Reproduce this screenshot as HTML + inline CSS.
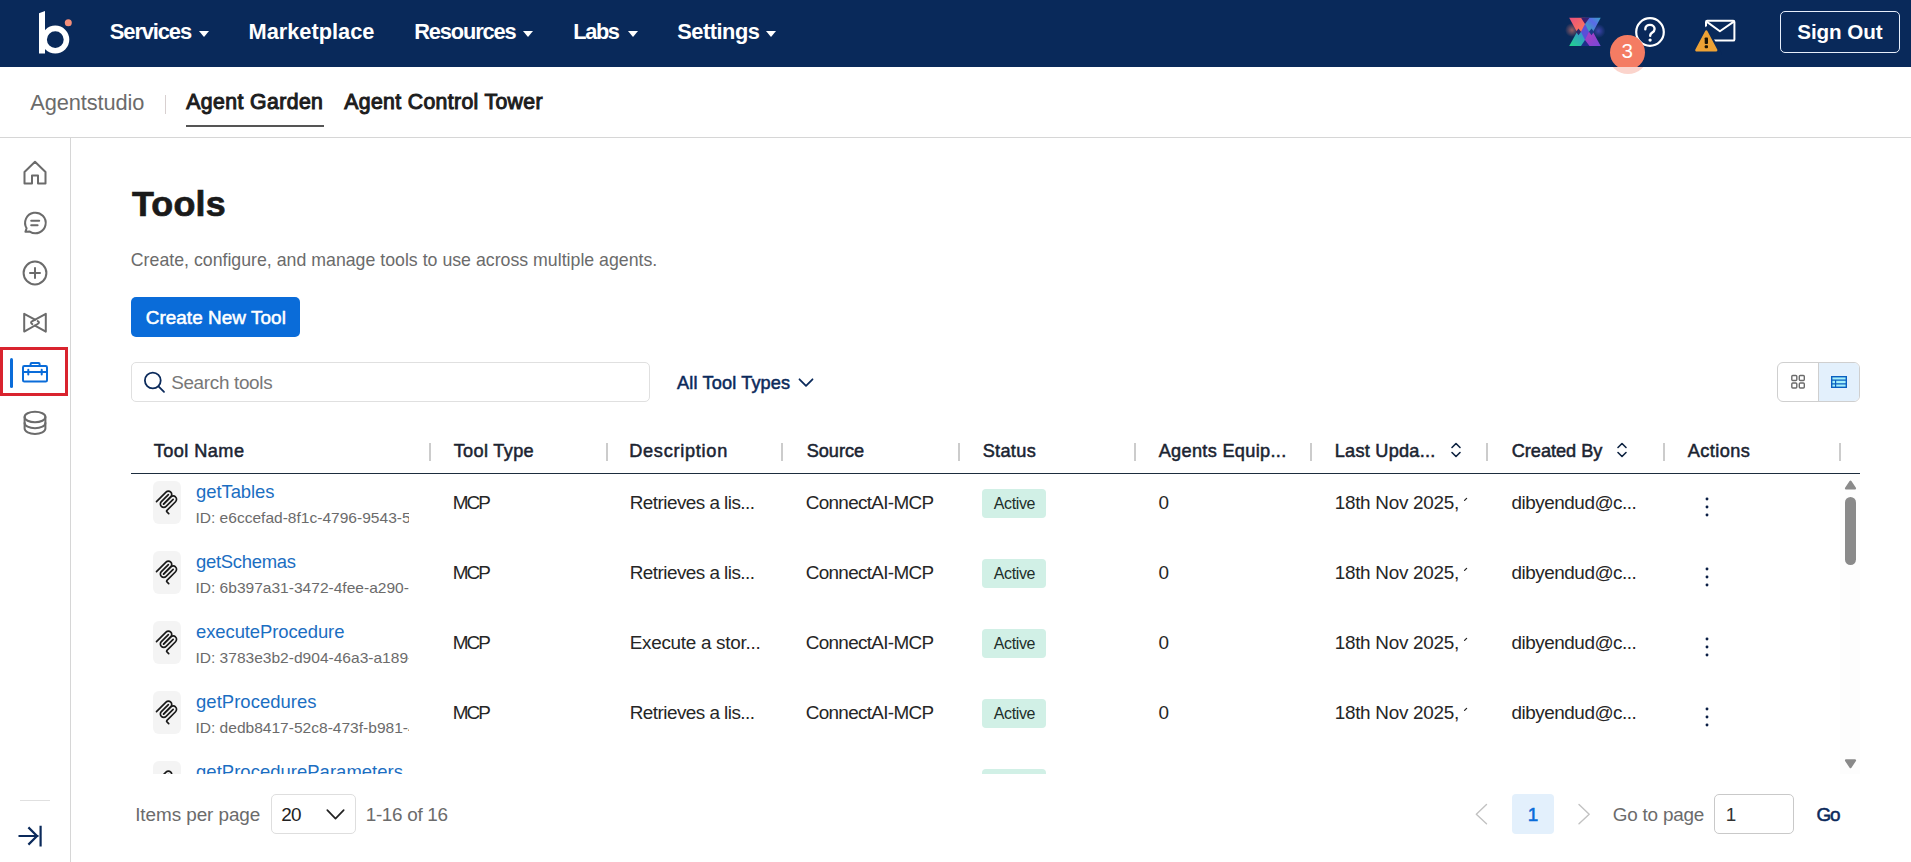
<!DOCTYPE html>
<html lang="en">
<head>
<meta charset="utf-8">
<title>Tools - Agent Garden</title>
<style>
html,body{margin:0;padding:0;background:#fff;}
body{width:1911px;height:862px;position:relative;overflow:hidden;font-family:"Liberation Sans",sans-serif;}
.t{position:absolute;white-space:nowrap;line-height:normal;}
.abs{position:absolute;}
#topnav{position:absolute;left:0;top:0;width:1911px;height:67px;background:#09295a;}
#subnav{position:absolute;left:0;top:67px;width:1911px;height:70px;border-bottom:1px solid #d6d6d6;}
#sidebar{position:absolute;left:0;top:138px;width:70px;height:724px;border-right:1px solid #d6d6d6;}
.tri{position:absolute;width:0;height:0;border-left:5.5px solid transparent;border-right:5.5px solid transparent;border-top:6.5px solid #fff;top:31px;}
.sep{position:absolute;top:443px;width:2px;height:18px;background:#cccccc;}
.ibox{position:absolute;left:153px;width:28px;height:43px;background:#f4f4f4;border-radius:6px;}
.mcp{position:absolute;left:152.9px;width:27.3px;height:27.3px;}
.badge{position:absolute;left:982px;width:64px;height:29px;background:#d1f0e6;border-radius:4px;}
.kebab{position:absolute;left:1704px;fill:#0b1f45;}
.sico{position:absolute;fill:none;stroke:#6b6b6b;stroke-width:2;stroke-linecap:round;stroke-linejoin:round;}
</style>
</head>
<body>
<!-- top navigation -->
<div id="topnav">
  <svg class="abs" style="left:30px;top:5px" width="50" height="55" viewBox="30 5 50 55">
    <path d="M39 13.3 L45 10.9 V53.6 H39 Z" fill="#fff"/>
    <circle cx="55.3" cy="39.6" r="11.2" fill="none" stroke="#fff" stroke-width="5.6"/>
    <circle cx="68.3" cy="22.7" r="3.5" fill="#f58f7a"/>
  </svg>
  <div class="tri" style="left:199px"></div>
  <div class="tri" style="left:523px"></div>
  <div class="tri" style="left:627.5px"></div>
  <div class="tri" style="left:766px"></div>
  <!-- X logo -->
  <svg class="abs" style="left:1555px;top:5px" width="60" height="56" viewBox="1555 5 60 56">
    <defs>
      <radialGradient id="glowL" cx="0.5" cy="0.5" r="0.5"><stop offset="0" stop-color="#f7806a" stop-opacity="0.6"/><stop offset="1" stop-color="#f7806a" stop-opacity="0"/></radialGradient>
      <radialGradient id="glowR" cx="0.5" cy="0.5" r="0.5"><stop offset="0" stop-color="#6a5cf0" stop-opacity="0.55"/><stop offset="1" stop-color="#6a5cf0" stop-opacity="0"/></radialGradient>
      <linearGradient id="gTL" x1="0" y1="0" x2="1" y2="1"><stop offset="0" stop-color="#e8507e"/><stop offset="1" stop-color="#ff7a55"/></linearGradient>
      <linearGradient id="gTR" x1="1" y1="0" x2="0" y2="1"><stop offset="0" stop-color="#3aa3c8"/><stop offset="0.4" stop-color="#5a6ae8"/><stop offset="1" stop-color="#2fb8a8"/></linearGradient>
      <linearGradient id="gBL" x1="0" y1="1" x2="1" y2="0"><stop offset="0" stop-color="#1fd68a"/><stop offset="1" stop-color="#3a8ad8"/></linearGradient>
      <linearGradient id="gBR" x1="0" y1="0" x2="1" y2="1"><stop offset="0" stop-color="#b03cc0"/><stop offset="1" stop-color="#7448d8"/></linearGradient>
    </defs>
    <circle cx="1572" cy="30" r="7" fill="url(#glowL)"/>
    <circle cx="1598.5" cy="31" r="7" fill="url(#glowR)"/>
    <polygon points="1569.2,17.8 1585,17.8 1585,32 1577,32" fill="url(#gTL)"/>
    <polygon points="1585,17.8 1600.7,17.8 1593,32 1585,32" fill="url(#gTR)"/>
    <polygon points="1577,32 1585,32 1585,46.1 1569.2,46.1" fill="url(#gBL)"/>
    <polygon points="1585,32 1593,32 1600.7,46.1 1585,46.1" fill="url(#gBR)"/>
    <polygon points="1581,17.8 1589.5,17.8 1585,24" fill="#3a1f70"/>
    <polygon points="1581,46.1 1589.5,46.1 1585,40" fill="#1e2f8a"/>
    <polygon points="1578.5,28.5 1581,31.8 1578.5,35.2 1576,31.8" fill="#2a2a6a"/>
    <polygon points="1591.5,28.5 1594,31.8 1591.5,35.2 1589,31.8" fill="#1a3a8a"/>
    <polygon points="1585,24 1589,31.8 1585,40 1581,31.8" fill="#5a4fd8"/>
  </svg>
  <!-- help -->
  <svg class="abs" style="left:1630px;top:12px" width="40" height="40" viewBox="1630 12 40 40">
    <circle cx="1650" cy="32" r="13.8" fill="none" stroke="#fff" stroke-width="2.2"/>
    <path d="M1645.3 29.2 C1645.3 26.4 1647.5 24.9 1650 24.9 C1652.6 24.9 1654.6 26.6 1654.6 29 C1654.6 31.4 1652.7 32.3 1651.4 33.3 C1650.5 34 1650.2 34.7 1650.2 35.8" fill="none" stroke="#fff" stroke-width="2.4" stroke-linecap="round"/>
    <circle cx="1650.1" cy="40.1" r="1.65" fill="#fff"/>
  </svg>
  <!-- mail + warning -->
  <svg class="abs" style="left:1690px;top:15px" width="50" height="40" viewBox="1690 15 50 40">
    <rect x="1706" y="20.8" width="28.4" height="19.8" rx="1.2" fill="none" stroke="#fff" stroke-width="2"/>
    <path d="M1706.6 21.6 L1719.9 31.2 L1733.8 21.6" fill="none" stroke="#fff" stroke-width="2" stroke-linejoin="round"/>
    <path d="M1692.5 54 L1721 54 L1706.3 27.3 Z" fill="#09295a" stroke="#09295a" stroke-width="2" stroke-linejoin="round"/>
    <path d="M1696.6 50.2 L1716 50.2 L1706.3 31.8 Z" fill="#eea235" stroke="#eea235" stroke-width="2.8" stroke-linejoin="round"/>
    <rect x="1704.7" y="37.4" width="3.3" height="6.6" rx="0.9" fill="#1b1406"/>
    <rect x="1704.7" y="45.2" width="3.3" height="3" rx="1" fill="#1b1406"/>
  </svg>
  <!-- sign out -->
  <div class="abs" style="left:1780px;top:10.5px;width:118px;height:40.5px;border:1px solid #e6eefb;border-radius:5px;"></div>
</div>
<!-- badge -->
<div class="abs" style="left:1610px;top:35px;width:35px;height:35px;border-radius:50%;background:#f47c63;"></div>
<div class="abs" style="left:1600px;top:67px;width:60px;height:12px;background:#fff;overflow:hidden;">
  <div class="abs" style="left:7.5px;top:-33px;width:40px;height:40px;border-radius:50%;background:rgba(244,124,99,0.33);filter:blur(0.6px);"></div>
</div>

<!-- sub navigation -->
<div id="subnav">
  <div class="abs" style="left:164.5px;top:28px;width:1px;height:19px;background:#d8d0d0;"></div>
  <div class="abs" style="left:186px;top:58px;width:138px;height:2px;background:#555;"></div>
</div>

<!-- sidebar -->
<div id="sidebar">
  <div class="abs" style="left:20px;top:662px;width:30px;height:1px;background:#e0e0e0;"></div>
</div>
<svg class="sico" style="left:20px;top:155px" width="30" height="34" viewBox="20 155 30 34">
  <path d="M24.5 172 L35 161.8 L45.5 172 V183.5 H38 V175.5 H32 V183.5 H24.5 Z"/>
</svg>
<svg class="sico" style="left:20px;top:208px" width="30" height="30" viewBox="20 208 30 30">
  <path d="M25.4 231.8 L26.6 228.3 A10.3 10.3 0 1 1 29.8 231.6 Z"/>
  <path d="M31.2 220.8 H39.2 M31.2 225.3 H37.6"/>
</svg>
<svg class="sico" style="left:20px;top:258px" width="30" height="30" viewBox="20 258 30 30">
  <circle cx="35" cy="273" r="11.4"/>
  <path d="M30 273 H40 M35 268 V278"/>
</svg>
<svg class="sico" style="left:20px;top:308px" width="30" height="30" viewBox="20 308 30 30">
  <path d="M35 319.7 L24.2 313.8 V331.6 L37.6 324 Q40.2 322.6 37.7 321.1"/>
  <path d="M35 325.6 L45.8 331.6 V313.8 L32.4 321.2 Q29.8 322.6 32.3 324.2"/>
</svg>
<div class="abs" style="left:0px;top:346.5px;width:62px;height:43px;border:3px solid #d9232e;"></div>
<div class="abs" style="left:10.2px;top:358px;width:2.8px;height:29.6px;background:#0a6cd9;border-radius:2px;"></div>
<svg class="sico" style="left:18px;top:356px;stroke:#0a6cd9" width="34" height="30" viewBox="18 356 34 30">
  <rect x="23" y="366.1" width="24" height="15.4" rx="1.3"/>
  <path d="M30.6 365.8 V364 Q30.6 363 31.6 363 H38.6 Q39.6 363 39.6 364 V365.8"/>
  <path d="M23 372.1 H47 M28.3 369.8 V374.4 M41.7 369.8 V374.4"/>
</svg>
<svg class="sico" style="left:20px;top:406px" width="30" height="32" viewBox="20 406 30 32">
  <ellipse cx="35" cy="417" rx="10.4" ry="5.3"/>
  <path d="M24.6 417 V428.6 A10.4 5.3 0 0 0 45.4 428.6 V417"/>
  <path d="M24.6 422.9 A10.4 5.3 0 0 0 45.4 422.9"/>
</svg>
<svg class="abs" style="left:14px;top:820px" width="32" height="32" viewBox="14 820 32 32">
  <path d="M18.5 836 H38.5 M28.4 827.4 L37 836 L28.4 844.6 M40.6 825.8 V846.4" fill="none" stroke="#0b2a5b" stroke-width="2.2" stroke-linecap="butt" stroke-linejoin="miter"/>
</svg>

<!-- main content -->
<div class="abs" style="left:131px;top:297px;width:169px;height:40px;background:#0a6cd9;border-radius:5px;"></div>
<div class="abs" style="left:131px;top:362px;width:517px;height:37.5px;border:1px solid #e0e0e0;border-radius:5px;"></div>
<svg class="abs" style="left:140px;top:368px" width="30" height="30" viewBox="140 368 30 30">
  <circle cx="152.8" cy="380.5" r="7.9" fill="none" stroke="#0b2a5b" stroke-width="1.8"/>
  <path d="M158.5 386.3 L164 391.8" stroke="#0b2a5b" stroke-width="1.8" stroke-linecap="round"/>
</svg>
<svg class="abs" style="left:795px;top:374px" width="22" height="16" viewBox="795 374 22 16">
  <path d="M799.5 379.3 L806 385.8 L812.5 379.3" fill="none" stroke="#0b2a5b" stroke-width="1.8" stroke-linecap="round" stroke-linejoin="round"/>
</svg>
<!-- view toggle -->
<div class="abs" style="left:1777px;top:362px;width:81px;height:37.5px;border:1px solid #cfcfcf;border-radius:6px;overflow:hidden;">
  <div class="abs" style="left:40px;top:0;width:41px;height:40px;background:#e3f0fc;border-left:1px solid #cfcfcf;"></div>
</div>
<svg class="abs" style="left:1786px;top:370px" width="24" height="24" viewBox="1786 370 24 24">
  <g fill="none" stroke="#6b6b6b" stroke-width="1.4">
    <rect x="1791.8" y="375.5" width="5" height="5" rx="1"/><rect x="1799.3" y="375.5" width="5" height="5" rx="1"/>
    <rect x="1791.8" y="383" width="5" height="5" rx="1"/><rect x="1799.3" y="383" width="5" height="5" rx="1"/>
  </g>
</svg>
<svg class="abs" style="left:1826px;top:370px" width="26" height="24" viewBox="1826 370 26 24">
  <rect x="1831.7" y="376.7" width="14.6" height="10.6" fill="#a6f0fa" stroke="#0a5fc0" stroke-width="1.4"/>
  <path d="M1831.7 380.2 H1846.3 M1831.7 383.8 H1846.3 M1835.6 380.2 V387.3" stroke="#0a5fc0" stroke-width="1.2"/>
</svg>

<!-- table header -->

<div class="sep" style="left:429.0px"></div>
<div class="sep" style="left:605.5px"></div>
<div class="sep" style="left:781.0px"></div>
<div class="sep" style="left:958.0px"></div>
<div class="sep" style="left:1134.0px"></div>
<div class="sep" style="left:1310.0px"></div>
<div class="sep" style="left:1486.0px"></div>
<div class="sep" style="left:1663.0px"></div>
<div class="sep" style="left:1839.0px"></div>
<div class="abs" style="left:131px;top:472.5px;width:1729px;height:1.6px;background:#1d2d3e;"></div>
<svg class="abs" style="left:1446px;top:440px" width="20" height="20" viewBox="1446 440 20 20">
  <path d="M1452 447.5 L1456 443.5 L1460 447.5 M1452 452.5 L1456 456.5 L1460 452.5" fill="none" stroke="#0d2240" stroke-width="1.6" stroke-linecap="round" stroke-linejoin="round"/>
</svg>
<svg class="abs" style="left:1612px;top:440px" width="20" height="20" viewBox="1612 440 20 20">
  <path d="M1618 447.5 L1622 443.5 L1626 447.5 M1618 452.5 L1622 456.5 L1626 452.5" fill="none" stroke="#0d2240" stroke-width="1.6" stroke-linecap="round" stroke-linejoin="round"/>
</svg>

<!-- table body (clipped) -->
<div class="abs" style="left:0;top:0;width:1840px;height:774px;overflow:hidden;">
<div class="ibox" style="top:481px"></div>
<svg class="mcp" style="top:487.5px" viewBox="0 0 195 195"><g fill="none" stroke="#1a1a1a" stroke-width="12" stroke-linecap="round"><path d="M25 97.8L92.9 29.9C102.3 20.5 117.5 20.5 126.8 29.9C136.2 39.3 136.2 54.5 126.8 63.8L75.5 115.1"/><path d="M76.2 114.4L126.8 63.8C136.2 54.5 151.4 54.5 160.8 63.8L161.1 64.2C170.5 73.5 170.5 88.7 161.1 98.1L99.7 159.5C96.6 162.6 96.6 167.7 99.7 170.8L112.3 183.4"/><path d="M109.9 46.9L59.7 97.1C50.3 106.5 50.3 121.7 59.7 131C69.1 140.4 84.3 140.4 93.6 131L143.9 80.8"/></g></svg>
<div class="badge" style="top:489px"></div>
<svg class="abs" style="left:1462px;top:496px" width="7" height="7" viewBox="0 0 7 7"><path d="M2.6 4.4 L4.6 2.4" stroke="#262626" stroke-width="1.3" stroke-linecap="round"/></svg>
<svg class="kebab" style="top:496px" width="6" height="22"><circle cx="3" cy="3" r="1.45"/><circle cx="3" cy="11" r="1.45"/><circle cx="3" cy="19" r="1.45"/></svg>
<div class="ibox" style="top:551px"></div>
<svg class="mcp" style="top:557.5px" viewBox="0 0 195 195"><g fill="none" stroke="#1a1a1a" stroke-width="12" stroke-linecap="round"><path d="M25 97.8L92.9 29.9C102.3 20.5 117.5 20.5 126.8 29.9C136.2 39.3 136.2 54.5 126.8 63.8L75.5 115.1"/><path d="M76.2 114.4L126.8 63.8C136.2 54.5 151.4 54.5 160.8 63.8L161.1 64.2C170.5 73.5 170.5 88.7 161.1 98.1L99.7 159.5C96.6 162.6 96.6 167.7 99.7 170.8L112.3 183.4"/><path d="M109.9 46.9L59.7 97.1C50.3 106.5 50.3 121.7 59.7 131C69.1 140.4 84.3 140.4 93.6 131L143.9 80.8"/></g></svg>
<div class="badge" style="top:559px"></div>
<svg class="abs" style="left:1462px;top:566px" width="7" height="7" viewBox="0 0 7 7"><path d="M2.6 4.4 L4.6 2.4" stroke="#262626" stroke-width="1.3" stroke-linecap="round"/></svg>
<svg class="kebab" style="top:566px" width="6" height="22"><circle cx="3" cy="3" r="1.45"/><circle cx="3" cy="11" r="1.45"/><circle cx="3" cy="19" r="1.45"/></svg>
<div class="ibox" style="top:621px"></div>
<svg class="mcp" style="top:627.5px" viewBox="0 0 195 195"><g fill="none" stroke="#1a1a1a" stroke-width="12" stroke-linecap="round"><path d="M25 97.8L92.9 29.9C102.3 20.5 117.5 20.5 126.8 29.9C136.2 39.3 136.2 54.5 126.8 63.8L75.5 115.1"/><path d="M76.2 114.4L126.8 63.8C136.2 54.5 151.4 54.5 160.8 63.8L161.1 64.2C170.5 73.5 170.5 88.7 161.1 98.1L99.7 159.5C96.6 162.6 96.6 167.7 99.7 170.8L112.3 183.4"/><path d="M109.9 46.9L59.7 97.1C50.3 106.5 50.3 121.7 59.7 131C69.1 140.4 84.3 140.4 93.6 131L143.9 80.8"/></g></svg>
<div class="badge" style="top:629px"></div>
<svg class="abs" style="left:1462px;top:636px" width="7" height="7" viewBox="0 0 7 7"><path d="M2.6 4.4 L4.6 2.4" stroke="#262626" stroke-width="1.3" stroke-linecap="round"/></svg>
<svg class="kebab" style="top:636px" width="6" height="22"><circle cx="3" cy="3" r="1.45"/><circle cx="3" cy="11" r="1.45"/><circle cx="3" cy="19" r="1.45"/></svg>
<div class="ibox" style="top:691px"></div>
<svg class="mcp" style="top:697.5px" viewBox="0 0 195 195"><g fill="none" stroke="#1a1a1a" stroke-width="12" stroke-linecap="round"><path d="M25 97.8L92.9 29.9C102.3 20.5 117.5 20.5 126.8 29.9C136.2 39.3 136.2 54.5 126.8 63.8L75.5 115.1"/><path d="M76.2 114.4L126.8 63.8C136.2 54.5 151.4 54.5 160.8 63.8L161.1 64.2C170.5 73.5 170.5 88.7 161.1 98.1L99.7 159.5C96.6 162.6 96.6 167.7 99.7 170.8L112.3 183.4"/><path d="M109.9 46.9L59.7 97.1C50.3 106.5 50.3 121.7 59.7 131C69.1 140.4 84.3 140.4 93.6 131L143.9 80.8"/></g></svg>
<div class="badge" style="top:699px"></div>
<svg class="abs" style="left:1462px;top:706px" width="7" height="7" viewBox="0 0 7 7"><path d="M2.6 4.4 L4.6 2.4" stroke="#262626" stroke-width="1.3" stroke-linecap="round"/></svg>
<svg class="kebab" style="top:706px" width="6" height="22"><circle cx="3" cy="3" r="1.45"/><circle cx="3" cy="11" r="1.45"/><circle cx="3" cy="19" r="1.45"/></svg>
<div class="ibox" style="top:761px"></div>
<svg class="mcp" style="top:767.5px" viewBox="0 0 195 195"><g fill="none" stroke="#1a1a1a" stroke-width="12" stroke-linecap="round"><path d="M25 97.8L92.9 29.9C102.3 20.5 117.5 20.5 126.8 29.9C136.2 39.3 136.2 54.5 126.8 63.8L75.5 115.1"/><path d="M76.2 114.4L126.8 63.8C136.2 54.5 151.4 54.5 160.8 63.8L161.1 64.2C170.5 73.5 170.5 88.7 161.1 98.1L99.7 159.5C96.6 162.6 96.6 167.7 99.7 170.8L112.3 183.4"/><path d="M109.9 46.9L59.7 97.1C50.3 106.5 50.3 121.7 59.7 131C69.1 140.4 84.3 140.4 93.6 131L143.9 80.8"/></g></svg>
<div class="badge" style="top:769px"></div>
<svg class="kebab" style="top:776px" width="6" height="22"><circle cx="3" cy="3" r="1.45"/><circle cx="3" cy="11" r="1.45"/><circle cx="3" cy="19" r="1.45"/></svg>
<div class="t" id="r0n" style="left:196.05px;top:480.90px;font-size:18.46px;font-weight:400;color:#1b6ec2;letter-spacing:-0.067px;">getTables</div>
<div class="t" id="r0i" style="left:195.41px;top:508.80px;font-size:15.55px;font-weight:400;color:#6b6b6b;letter-spacing:0.000px;width:213.6px;overflow:hidden;">ID: e6ccefad-8f1c-4796-9543-5</div>
<div class="t" id="r0t" style="left:452.68px;top:492.00px;font-size:18.90px;font-weight:400;color:#262626;letter-spacing:-1.900px;">MCP</div>
<div class="t" id="r0d" style="left:629.68px;top:492.00px;font-size:18.90px;font-weight:400;color:#262626;letter-spacing:-0.529px;">Retrieves a lis...</div>
<div class="t" id="r0s" style="left:805.68px;top:492.00px;font-size:18.90px;font-weight:400;color:#262626;letter-spacing:-0.675px;">ConnectAI-MCP</div>
<div class="t" id="r0a" style="left:993.78px;top:495.00px;font-size:15.99px;font-weight:400;color:#1d2e2a;letter-spacing:-0.360px;">Active</div>
<div class="t" id="r0z" style="left:1158.58px;top:492.00px;font-size:18.90px;font-weight:400;color:#262626;letter-spacing:0.000px;">0</div>
<div class="t" id="r0u" style="left:1334.68px;top:492.00px;font-size:18.90px;font-weight:400;color:#262626;letter-spacing:-0.277px;">18th Nov 2025,</div>
<div class="t" id="r0c" style="left:1511.58px;top:492.00px;font-size:18.90px;font-weight:400;color:#262626;letter-spacing:-0.485px;">dibyendud@c...</div>
<div class="t" id="r1n" style="left:196.05px;top:550.90px;font-size:18.46px;font-weight:400;color:#1b6ec2;letter-spacing:-0.280px;">getSchemas</div>
<div class="t" id="r1i" style="left:195.41px;top:578.80px;font-size:15.55px;font-weight:400;color:#6b6b6b;letter-spacing:0.000px;width:213.6px;overflow:hidden;">ID: 6b397a31-3472-4fee-a290-4</div>
<div class="t" id="r1t" style="left:452.68px;top:562.00px;font-size:18.90px;font-weight:400;color:#262626;letter-spacing:-1.900px;">MCP</div>
<div class="t" id="r1d" style="left:629.68px;top:562.00px;font-size:18.90px;font-weight:400;color:#262626;letter-spacing:-0.529px;">Retrieves a lis...</div>
<div class="t" id="r1s" style="left:805.68px;top:562.00px;font-size:18.90px;font-weight:400;color:#262626;letter-spacing:-0.675px;">ConnectAI-MCP</div>
<div class="t" id="r1a" style="left:993.78px;top:565.00px;font-size:15.99px;font-weight:400;color:#1d2e2a;letter-spacing:-0.360px;">Active</div>
<div class="t" id="r1z" style="left:1158.58px;top:562.00px;font-size:18.90px;font-weight:400;color:#262626;letter-spacing:0.000px;">0</div>
<div class="t" id="r1u" style="left:1334.68px;top:562.00px;font-size:18.90px;font-weight:400;color:#262626;letter-spacing:-0.277px;">18th Nov 2025,</div>
<div class="t" id="r1c" style="left:1511.58px;top:562.00px;font-size:18.90px;font-weight:400;color:#262626;letter-spacing:-0.485px;">dibyendud@c...</div>
<div class="t" id="r2n" style="left:196.05px;top:620.90px;font-size:18.46px;font-weight:400;color:#1b6ec2;letter-spacing:-0.084px;">executeProcedure</div>
<div class="t" id="r2i" style="left:195.41px;top:648.80px;font-size:15.55px;font-weight:400;color:#6b6b6b;letter-spacing:0.000px;width:213.6px;overflow:hidden;">ID: 3783e3b2-d904-46a3-a189-4</div>
<div class="t" id="r2t" style="left:452.68px;top:632.00px;font-size:18.90px;font-weight:400;color:#262626;letter-spacing:-1.900px;">MCP</div>
<div class="t" id="r2d" style="left:629.68px;top:632.00px;font-size:18.90px;font-weight:400;color:#262626;letter-spacing:-0.281px;">Execute a stor...</div>
<div class="t" id="r2s" style="left:805.68px;top:632.00px;font-size:18.90px;font-weight:400;color:#262626;letter-spacing:-0.675px;">ConnectAI-MCP</div>
<div class="t" id="r2a" style="left:993.78px;top:635.00px;font-size:15.99px;font-weight:400;color:#1d2e2a;letter-spacing:-0.360px;">Active</div>
<div class="t" id="r2z" style="left:1158.58px;top:632.00px;font-size:18.90px;font-weight:400;color:#262626;letter-spacing:0.000px;">0</div>
<div class="t" id="r2u" style="left:1334.68px;top:632.00px;font-size:18.90px;font-weight:400;color:#262626;letter-spacing:-0.277px;">18th Nov 2025,</div>
<div class="t" id="r2c" style="left:1511.58px;top:632.00px;font-size:18.90px;font-weight:400;color:#262626;letter-spacing:-0.485px;">dibyendud@c...</div>
<div class="t" id="r3n" style="left:196.05px;top:690.90px;font-size:18.46px;font-weight:400;color:#1b6ec2;letter-spacing:0.045px;">getProcedures</div>
<div class="t" id="r3i" style="left:195.41px;top:718.80px;font-size:15.55px;font-weight:400;color:#6b6b6b;letter-spacing:0.000px;width:213.6px;overflow:hidden;">ID: dedb8417-52c8-473f-b981-4</div>
<div class="t" id="r3t" style="left:452.68px;top:702.00px;font-size:18.90px;font-weight:400;color:#262626;letter-spacing:-1.900px;">MCP</div>
<div class="t" id="r3d" style="left:629.68px;top:702.00px;font-size:18.90px;font-weight:400;color:#262626;letter-spacing:-0.529px;">Retrieves a lis...</div>
<div class="t" id="r3s" style="left:805.68px;top:702.00px;font-size:18.90px;font-weight:400;color:#262626;letter-spacing:-0.675px;">ConnectAI-MCP</div>
<div class="t" id="r3a" style="left:993.78px;top:705.00px;font-size:15.99px;font-weight:400;color:#1d2e2a;letter-spacing:-0.360px;">Active</div>
<div class="t" id="r3z" style="left:1158.58px;top:702.00px;font-size:18.90px;font-weight:400;color:#262626;letter-spacing:0.000px;">0</div>
<div class="t" id="r3u" style="left:1334.68px;top:702.00px;font-size:18.90px;font-weight:400;color:#262626;letter-spacing:-0.277px;">18th Nov 2025,</div>
<div class="t" id="r3c" style="left:1511.58px;top:702.00px;font-size:18.90px;font-weight:400;color:#262626;letter-spacing:-0.485px;">dibyendud@c...</div>
<div class="t" id="r4n" style="left:196.05px;top:760.90px;font-size:18.46px;font-weight:400;color:#1b6ec2;letter-spacing:0.043px;">getProcedureParameters</div>
</div>
<!-- scrollbar -->
<div class="abs" style="left:1840px;top:474px;width:20px;height:300px;background:#fdfdfd;"></div>
<svg class="abs" style="left:1840px;top:474px" width="20" height="300" viewBox="1840 474 20 300">
  <path d="M1846 488.4 L1850.5 481.6 L1855 488.4 Z" fill="#8a8a8a" stroke="#8a8a8a" stroke-width="2.2" stroke-linejoin="round"/>
  <rect x="1845" y="497" width="11" height="68" rx="5.5" fill="#8a8a8a"/>
  <path d="M1846 760.4 L1850.5 767.2 L1855 760.4 Z" fill="#8a8a8a" stroke="#8a8a8a" stroke-width="2.2" stroke-linejoin="round"/>
</svg>

<!-- pagination -->
<div class="abs" style="left:271px;top:794px;width:82.5px;height:37.5px;border:1px solid #dedede;border-radius:5px;"></div>
<svg class="abs" style="left:322px;top:804px" width="26" height="20" viewBox="322 804 26 20">
  <path d="M327.3 810.2 L335.5 818.6 L343.7 810.2" fill="none" stroke="#222" stroke-width="1.7" stroke-linecap="round" stroke-linejoin="round"/>
</svg>
<svg class="abs" style="left:1470px;top:800px" width="130" height="30" viewBox="1470 800 130 30">
  <path d="M1486.5 804.5 L1476.3 814.2 L1486.5 823.8" fill="none" stroke="#c2c2c2" stroke-width="1.4" stroke-linecap="round" stroke-linejoin="round"/>
  <path d="M1579 804.5 L1589.2 814.2 L1579 823.8" fill="none" stroke="#c2c2c2" stroke-width="1.4" stroke-linecap="round" stroke-linejoin="round"/>
</svg>
<div class="abs" style="left:1512px;top:794px;width:42px;height:40px;background:#e3f0fc;border-radius:4px;"></div>
<div class="abs" style="left:1714px;top:794px;width:78px;height:38px;border:1px solid #c9c9c9;border-radius:5px;"></div>

<div class="t" id="n1" style="left:109.86px;top:19.30px;font-size:21.95px;font-weight:700;color:#fff;letter-spacing:-1.149px;">Services</div>
<div class="t" id="n2" style="left:248.47px;top:19.20px;font-size:21.80px;font-weight:700;color:#fff;letter-spacing:0.000px;">Marketplace</div>
<div class="t" id="n3" style="left:414.25px;top:19.20px;font-size:21.80px;font-weight:700;color:#fff;letter-spacing:-1.147px;">Resources</div>
<div class="t" id="n4" style="left:573.25px;top:19.20px;font-size:21.80px;font-weight:700;color:#fff;letter-spacing:-1.380px;">Labs</div>
<div class="t" id="n5" style="left:677.15px;top:19.20px;font-size:21.80px;font-weight:700;color:#fff;letter-spacing:-0.463px;">Settings</div>
<div class="t" id="n6" style="left:1797.24px;top:19.90px;font-size:20.64px;font-weight:700;color:#fff;letter-spacing:-0.077px;">Sign Out</div>
<div class="t" id="n7" style="left:1621.40px;top:38.90px;font-size:20.64px;font-weight:400;color:#fff;letter-spacing:0.000px;">3</div>
<div class="t" id="s1" style="left:30.27px;top:90.00px;font-size:21.80px;font-weight:400;color:#6b6b6b;letter-spacing:-0.090px;">Agentstudio</div>
<div class="t" id="s2" style="left:186.31px;top:90.00px;font-size:21.22px;font-weight:400;color:#1d1d1d;letter-spacing:0.409px;-webkit-text-stroke:1.02px #1d1d1d;">Agent Garden</div>
<div class="t" id="s3" style="left:344.31px;top:90.00px;font-size:21.22px;font-weight:400;color:#1d1d1d;letter-spacing:0.350px;-webkit-text-stroke:1.02px #1d1d1d;">Agent Control Tower</div>
<div class="t" id="m1" style="left:131.91px;top:184.00px;font-size:35.90px;font-weight:700;color:#1a1a1a;letter-spacing:0.180px;-webkit-text-stroke:0.7px #1a1a1a;">Tools</div>
<div class="t" id="m2" style="left:130.82px;top:249.70px;font-size:17.73px;font-weight:400;color:#6b6b6b;letter-spacing:0.008px;">Create, configure, and manage tools to use across multiple agents.</div>
<div class="t" id="m3" style="left:145.68px;top:307.00px;font-size:18.90px;font-weight:400;color:#fff;letter-spacing:0.064px;-webkit-text-stroke:0.53px #fff;">Create New Tool</div>
<div class="t" id="m4" style="left:171.18px;top:372.00px;font-size:18.90px;font-weight:400;color:#777;letter-spacing:-0.327px;">Search tools</div>
<div class="t" id="m5" style="left:677.03px;top:373.00px;font-size:18.17px;font-weight:400;color:#0b2a5b;letter-spacing:0.138px;-webkit-text-stroke:0.51px #0b2a5b;">All Tool Types</div>
<div class="t" id="h1" style="left:153.63px;top:441.00px;font-size:18.17px;font-weight:400;color:#1b2431;letter-spacing:0.450px;-webkit-text-stroke:0.51px #1b2431;">Tool Name</div>
<div class="t" id="h2" style="left:453.63px;top:441.00px;font-size:18.17px;font-weight:400;color:#1b2431;letter-spacing:0.337px;-webkit-text-stroke:0.51px #1b2431;">Tool Type</div>
<div class="t" id="h3" style="left:629.23px;top:441.00px;font-size:18.17px;font-weight:400;color:#1b2431;letter-spacing:0.720px;-webkit-text-stroke:0.51px #1b2431;">Description</div>
<div class="t" id="h4" style="left:806.63px;top:441.00px;font-size:18.17px;font-weight:400;color:#1b2431;letter-spacing:0.000px;-webkit-text-stroke:0.51px #1b2431;">Source</div>
<div class="t" id="h5" style="left:982.63px;top:441.00px;font-size:18.17px;font-weight:400;color:#1b2431;letter-spacing:0.324px;-webkit-text-stroke:0.51px #1b2431;">Status</div>
<div class="t" id="h6" style="left:1158.63px;top:441.00px;font-size:18.17px;font-weight:400;color:#1b2431;letter-spacing:0.321px;-webkit-text-stroke:0.51px #1b2431;">Agents Equip...</div>
<div class="t" id="h7" style="left:1334.73px;top:441.00px;font-size:18.17px;font-weight:400;color:#1b2431;letter-spacing:0.245px;-webkit-text-stroke:0.51px #1b2431;">Last Upda...</div>
<div class="t" id="h8" style="left:1511.63px;top:441.00px;font-size:18.17px;font-weight:400;color:#1b2431;letter-spacing:0.000px;-webkit-text-stroke:0.51px #1b2431;">Created By</div>
<div class="t" id="h9" style="left:1687.63px;top:441.00px;font-size:18.17px;font-weight:400;color:#1b2431;letter-spacing:0.450px;-webkit-text-stroke:0.51px #1b2431;">Actions</div>
<div class="t" id="p1" style="left:135.18px;top:804.00px;font-size:18.90px;font-weight:400;color:#6b6b6b;letter-spacing:-0.069px;">Items per page</div>
<div class="t" id="p2" style="left:281.18px;top:804.00px;font-size:18.90px;font-weight:400;color:#222;letter-spacing:-0.750px;">20</div>
<div class="t" id="p3" style="left:365.68px;top:804.00px;font-size:18.90px;font-weight:400;color:#6b6b6b;letter-spacing:-0.300px;">1-16 of 16</div>
<div class="t" id="p4" style="left:1527.68px;top:804.00px;font-size:18.90px;font-weight:400;color:#0a6cd9;letter-spacing:0.000px;-webkit-text-stroke:0.53px #0a6cd9;">1</div>
<div class="t" id="p5" style="left:1612.68px;top:804.00px;font-size:18.90px;font-weight:400;color:#6b6b6b;letter-spacing:-0.200px;">Go to page</div>
<div class="t" id="p6" style="left:1725.68px;top:804.00px;font-size:18.90px;font-weight:400;color:#333;letter-spacing:0.000px;">1</div>
<div class="t" id="p7" style="left:1816.58px;top:804.00px;font-size:18.90px;font-weight:400;color:#0b2a5b;letter-spacing:-1.200px;-webkit-text-stroke:0.53px #0b2a5b;">Go</div>
</body>
</html>
